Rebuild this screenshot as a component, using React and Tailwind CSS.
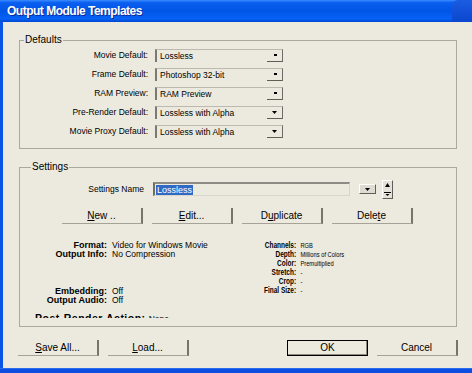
import React from "react";

const defaults = [
  { label: "Movie Default:", value: "Lossless", big: false },
  { label: "Frame Default:", value: "Photoshop 32-bit", big: false },
  { label: "RAM Preview:", value: "RAM Preview", big: false },
  { label: "Pre-Render Default:", value: "Lossless with Alpha", big: true },
  { label: "Movie Proxy Default:", value: "Lossless with Alpha", big: true },
];

const rightInfo = [
  ["Channels:", "RGB"],
  ["Depth:", "Millions of Colors"],
  ["Color:", "Premultiplied"],
  ["Stretch:", "-"],
  ["Crop:", "-"],
  ["Final Size:", "-"],
];

function Dropdown({ value, big }) {
  return (
    <div className="relative ml-[7px] w-[128px] h-[13px] flex items-center pl-[3px] text-[8.5px] leading-none border-l-2 border-l-[#7b7a72] border-t border-t-[#bcbab0] border-r border-r-[#6c6b64]">
      <span className="whitespace-nowrap">{value}</span>
      {/* little arrow button at the right end */}
      <div className="absolute right-0 bottom-0 w-[15px] h-px bg-[#5e5d57]" />
      <svg
        className="absolute right-[5px] top-[4px]"
        width={big ? 5 : 3}
        height={big ? 3 : 2}
        viewBox={big ? "0 0 5 3" : "0 0 3 2"}
      >
        {big ? (
          <polygon points="0,0 5,0 2.5,3" fill="#000" />
        ) : (
          <rect x="0" y="0" width="3" height="2" fill="#000" />
        )}
      </svg>
    </div>
  );
}

function Btn({ children, def }) {
  return (
    <div
      className={
        "w-[81px] h-[16px] flex items-center justify-center text-[10px] leading-none text-black " +
        (def
          ? "border border-black shadow-[inset_-1px_-1px_0_#8c8a80]"
          : "border-r-2 border-b border-r-[#76756d] border-b-[#a5a398]")
      }
    >
      {children}
    </div>
  );
}

function GroupBox({ title, left, className, children }) {
  return (
    <div className={"relative w-[438px] border border-[#aba99c] " + className}>
      <div
        className={
          "absolute -top-[7px] px-[1px] bg-[#eceade] text-[10px] leading-[12px] text-black " +
          left
        }
      >
        {title}
      </div>
      {children}
    </div>
  );
}

export default function App() {
  return (
    <div className="w-[472px] h-[373px] overflow-hidden flex flex-col font-['Liberation_Sans',Arial,sans-serif] text-black">
      {/* title bar */}
      <div className="h-[22px] flex items-center justify-between bg-[linear-gradient(to_bottom,#3a8cff_0%,#0a5ff0_12%,#0055e5_50%,#0762f6_85%,#0047d4_100%)]">
        <span className="pl-[7px] text-white font-bold text-[12px] tracking-[-0.5px] [text-shadow:1px_1px_0_#0b2a9a]">
          Output Module Templates
        </span>
        <div className="w-[20px] h-[22px] rounded-tl-[6px] bg-[linear-gradient(to_bottom,#1b5ce0,#0a47cf)]" />
      </div>

      <div className="flex h-[346px]">
        <div className="w-[3px] bg-[#0b55e6]" />
        <div className="flex-1 bg-[#eceade] pl-[16px] pt-[18px]">
          {/* Defaults */}
          <GroupBox title="Defaults" left="left-[4px]" className="h-[109px] pt-[8px]">
            <div className="flex flex-col gap-[6px]">
              {defaults.map((d) => (
                <div key={d.label} className="flex items-center h-[13px]">
                  <div className="w-[128px] text-right text-[8.5px] leading-none whitespace-nowrap">
                    {d.label}
                  </div>
                  <Dropdown value={d.value} big={d.big} />
                </div>
              ))}
            </div>
          </GroupBox>

          {/* Settings */}
          <GroupBox title="Settings" left="left-[11px]" className="mt-[18px] h-[160px] pt-[14px]">
            <div className="flex items-center h-[14px]">
              <div className="w-[124px] text-right text-[8.5px] leading-none whitespace-nowrap">
                Settings Name
              </div>
              <div className="ml-[9px] w-[197px] h-[14px] flex items-center pl-[1px] border-l-2 border-t-2 border-l-[#6f6e67] border-t-[#8d8c84] border-b border-r border-b-[#d8d6cc] border-r-[#d8d6cc]">
                <span className="bg-[#316ac5] text-white text-[9px] leading-[10px] px-[1px]">
                  Lossless
                </span>
              </div>
              <div className="ml-[9px] w-[17px] h-[10px] flex items-center justify-center bg-[#dedcd2] border-t border-l border-white border-r border-b border-r-[#5f5e58] border-b-[#5f5e58]">
                <svg width="5" height="3" viewBox="0 0 5 3">
                  <polygon points="0,0 5,0 2.5,3" fill="#000" />
                </svg>
              </div>
              <div className="ml-[6px] w-[11px] h-[19px] flex flex-col items-center justify-between py-[2px] bg-[#e4e2d8] border-t border-l border-white border-r border-b border-r-[#5f5e58] border-b-[#5f5e58]">
                <svg width="5" height="4" viewBox="0 0 5 4">
                  <polygon points="2.5,0 5,4 0,4" fill="#000" />
                </svg>
                <svg width="7" height="4" viewBox="0 0 7 4">
                  <rect x="0" y="0" width="7" height="1" fill="#000" />
                  <polygon points="1.5,2 5.5,2 3.5,4" fill="#000" />
                </svg>
              </div>
            </div>

            <div className="mt-[12px] ml-[42px] flex gap-[9px]">
              <Btn>
                <span className="underline">N</span>ew ..
              </Btn>
              <Btn>
                <span className="underline">E</span>dit...
              </Btn>
              <Btn>
                D<span className="underline">u</span>plicate
              </Btn>
              <Btn>
                Dele<span className="underline">t</span>e
              </Btn>
            </div>

            {/* info */}
            <div className="mt-[17px] flex h-[77px] overflow-hidden">
              <div className="w-[230px] flex flex-col">
                <div className="grid grid-cols-[87px_1fr] gap-x-[5px] leading-[9px]">
                  <span className="text-right font-bold text-[9px]">Format:</span>
                  <span className="text-[8.5px] whitespace-nowrap">Video for Windows Movie</span>
                  <span className="text-right font-bold text-[9px]">Output Info:</span>
                  <span className="text-[8.5px]">No Compression</span>
                </div>
                <div className="mt-[28px] grid grid-cols-[87px_1fr] gap-x-[5px] leading-[9px]">
                  <span className="text-right font-bold text-[9px]">Embedding:</span>
                  <span className="text-[8.5px]">Off</span>
                  <span className="text-right font-bold text-[9px]">Output Audio:</span>
                  <span className="text-[8.5px]">Off</span>
                </div>
                <div className="mt-[6px] pl-[15px] leading-[12px] whitespace-nowrap">
                  <span className="font-bold text-[10.5px] tracking-[0.5px]">Post-Render Action:</span>
                  <span className="text-[8.5px] ml-[3px]">None</span>
                </div>
              </div>
              <div className="origin-top-left scale-x-[0.72]">
                <div className="grid grid-cols-[64px_1fr] gap-x-[6px] leading-[9px] whitespace-nowrap">
                  {rightInfo.map(([k, v]) => (
                    <React.Fragment key={k}>
                      <span className="text-right font-bold text-[9px]">{k}</span>
                      <span className="text-[8px]">{v}</span>
                    </React.Fragment>
                  ))}
                </div>
              </div>
            </div>
          </GroupBox>

          {/* bottom buttons */}
          <div className="mt-[13px] -ml-px w-[440px] flex justify-between">
            <div className="flex gap-[9px]">
              <Btn>
                <span className="underline">S</span>ave All...
              </Btn>
              <Btn>
                <span className="underline">L</span>oad...
              </Btn>
            </div>
            <div className="flex gap-[9px]">
              <Btn def>OK</Btn>
              <Btn>Cancel</Btn>
            </div>
          </div>
        </div>
      </div>

      <div className="flex-1 bg-[#0b4ee0] border-t border-[#2a6af0]" />
    </div>
  );
}
